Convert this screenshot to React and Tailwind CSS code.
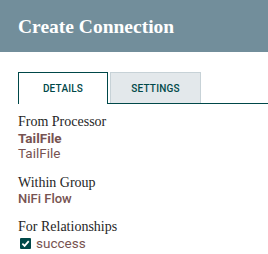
export default function App() {
  return (
    <div className="w-[268px] h-[254px] bg-white overflow-hidden" style={{ fontFamily: "Roboto, 'Liberation Sans', sans-serif" }}>
      <div className="h-[52px] bg-[#728e9b] pl-[18px] flex items-center">
        <h1 className="text-white text-[19.5px] font-bold leading-none mt-[1px]" style={{ fontFamily: "'Liberation Serif', serif" }}>
          Create Connection
        </h1>
      </div>
      <div className="flex pl-[18px] mt-[20px] h-[32px]">
        <div className="w-[90px] h-[32px] border border-b-0 border-[#004849] bg-white flex items-center justify-center text-[10px] font-medium text-[#004849] tracking-[0.2px]">
          DETAILS
        </div>
        <div className="flex-1 border-b border-[#004849] pl-[2px] flex items-end">
          <div className="w-[91px] h-[31px] border border-b-0 border-[#c7d2d7] bg-[#e3e8eb] flex items-center justify-center text-[10px] font-medium text-[#004849] tracking-[0.2px]">
            SETTINGS
          </div>
        </div>
      </div>
      <div className="pl-[18px] pt-[10px] text-[13.5px]">
        <div className="mb-[14px]">
          <div className="leading-[16px] text-[14px] text-[#262626]" style={{ fontFamily: "'Liberation Serif', serif" }}>From Processor</div>
          <div className="leading-[16px] text-[#775351] font-bold">TailFile</div>
          <div className="leading-[15px] text-[#775351]">TailFile</div>
        </div>
        <div className="mb-[13px]">
          <div className="leading-[16px] text-[14px] text-[#262626]" style={{ fontFamily: "'Liberation Serif', serif" }}>Within Group</div>
          <div className="leading-[15px] text-[13px] text-[#775351] font-medium">NiFi Flow</div>
        </div>
        <div>
          <div className="leading-[16px] text-[14px] text-[#262626]" style={{ fontFamily: "'Liberation Serif', serif" }}>For Relationships</div>
          <div className="flex items-center gap-[5px] pl-[2px] leading-[16px]">
            <span className="w-[11px] h-[11px] bg-[#004849] flex items-center justify-center rounded-[1px]">
              <svg width="9" height="9" viewBox="0 0 10 10">
                <path d="M1.5 5.2 L4 7.6 L8.6 2.4" stroke="white" strokeWidth="2" fill="none" />
              </svg>
            </span>
            <span className="text-[#775351]">success</span>
          </div>
        </div>
      </div>
    </div>
  );
}
